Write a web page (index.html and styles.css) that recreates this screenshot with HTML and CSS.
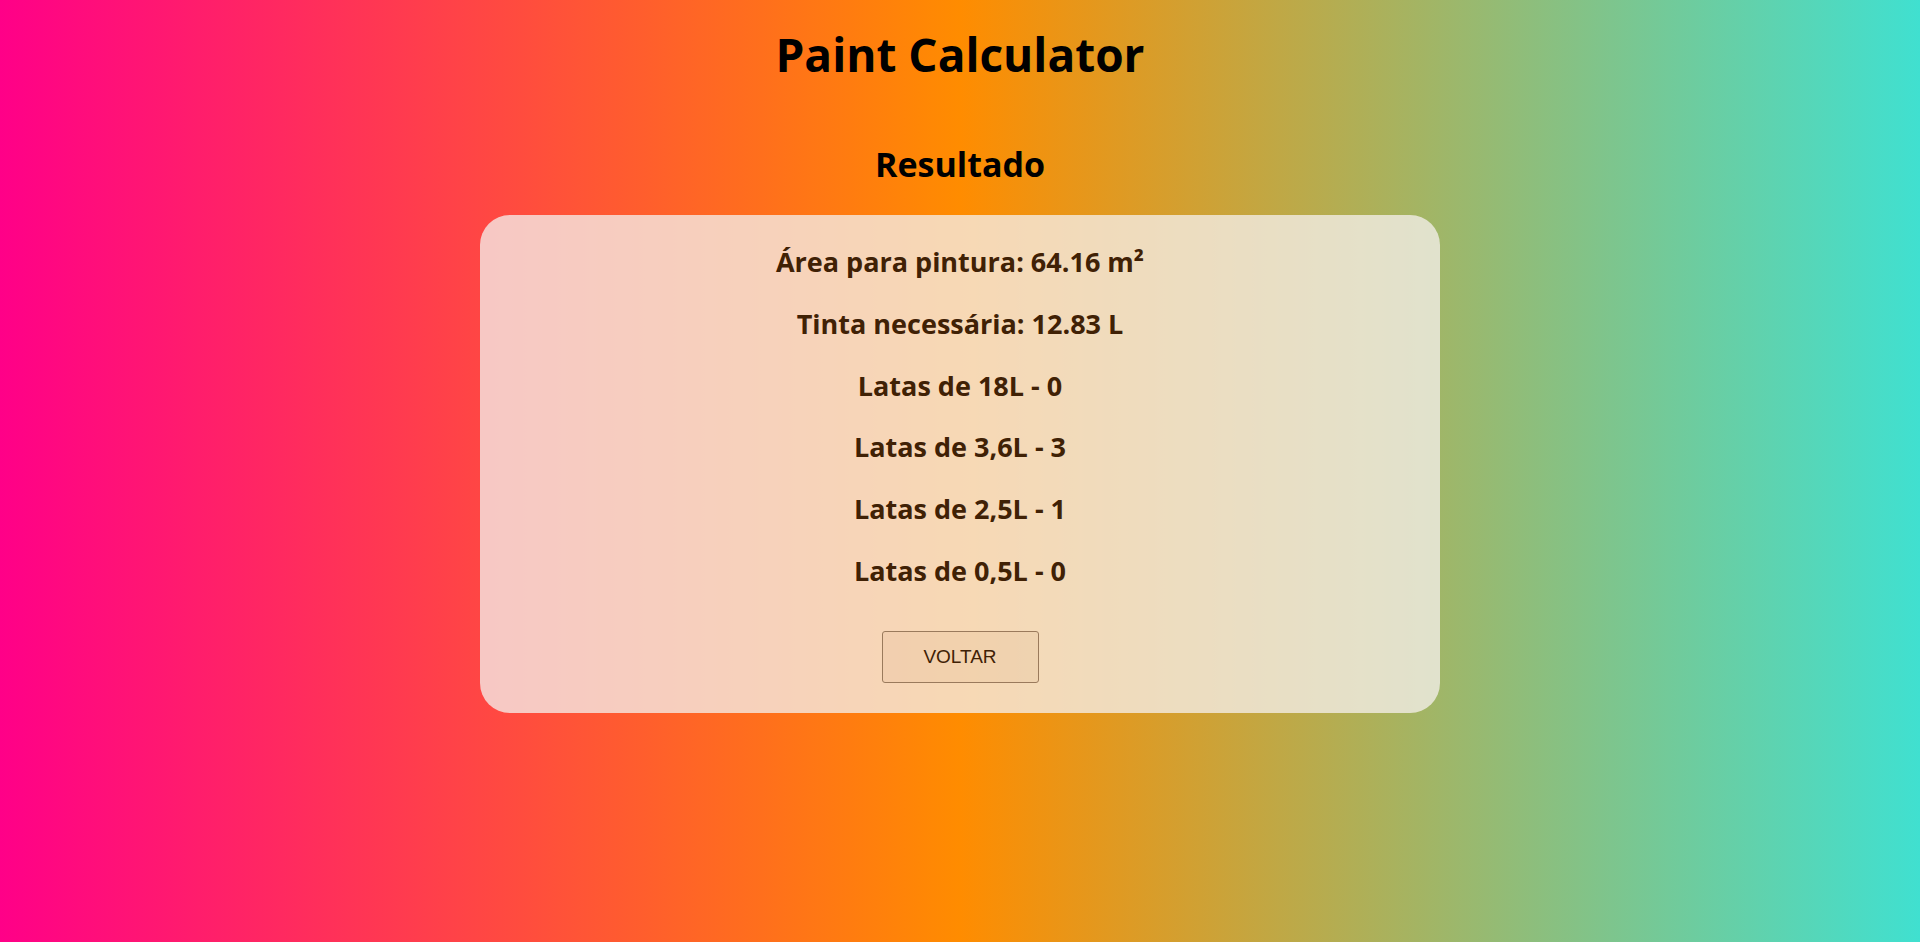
FILE: index.html
```html
<!DOCTYPE html>
<html lang="pt-BR">
<head>
<meta charset="utf-8">
<title>Paint Calculator</title>
<link rel="stylesheet" href="styles.css">
</head>
<body>
<main class="page">
  <h1 class="title">Paint Calculator</h1>
  <h2 class="subtitle">Resultado</h2>
  <section class="card">
    <p class="line">Área para pintura: 64.16 m²</p>
    <p class="line">Tinta necessária: 12.83 L</p>
    <p class="line">Latas de 18L - 0</p>
    <p class="line">Latas de 3,6L - 3</p>
    <p class="line">Latas de 2,5L - 1</p>
    <p class="line">Latas de 0,5L - 0</p>
    <button class="btn" type="button">VOLTAR</button>
  </section>
</main>
</body>
</html>
```

FILE: styles.css
```css
html, body {
  margin: 0;
  padding: 0;
  height: 100%;
}
body {
  background: linear-gradient(to right, #ff0088, #ff8c00 50%, #40e0d0);
  font-family: "Open Sans", "DejaVu Sans", sans-serif;
  color: #000;
}
.page {
  display: flex;
  flex-direction: column;
  align-items: center;
  padding-top: 24px;
}
.title {
  margin: 0;
  font-size: 46px;
  line-height: 60px;
  font-weight: 700;
}
.subtitle {
  margin: 60px 0 0;
  font-size: 34px;
  line-height: 40px;
  font-weight: 700;
}
.card {
  margin-top: 31px;
  width: 960px;
  box-sizing: border-box;
  padding: 30px;
  border-radius: 30px;
  background: rgba(245, 240, 236, 0.77);
  display: flex;
  flex-direction: column;
  align-items: center;
}
.line {
  margin: 0 0 28.8px;
  font-size: 27px;
  line-height: 33px;
  font-weight: 700;
  color: #402105;
}
.line:last-of-type {
  margin-bottom: 44px;
}
.btn {
  width: 157px;
  height: 52px;
  border: 1px solid #9a7a5c;
  border-radius: 3px;
  background: rgba(120, 60, 0, 0.04);
  color: #402105;
  font-family: "Liberation Sans", Arial, sans-serif;
  font-size: 19px;
  cursor: pointer;
}
```
